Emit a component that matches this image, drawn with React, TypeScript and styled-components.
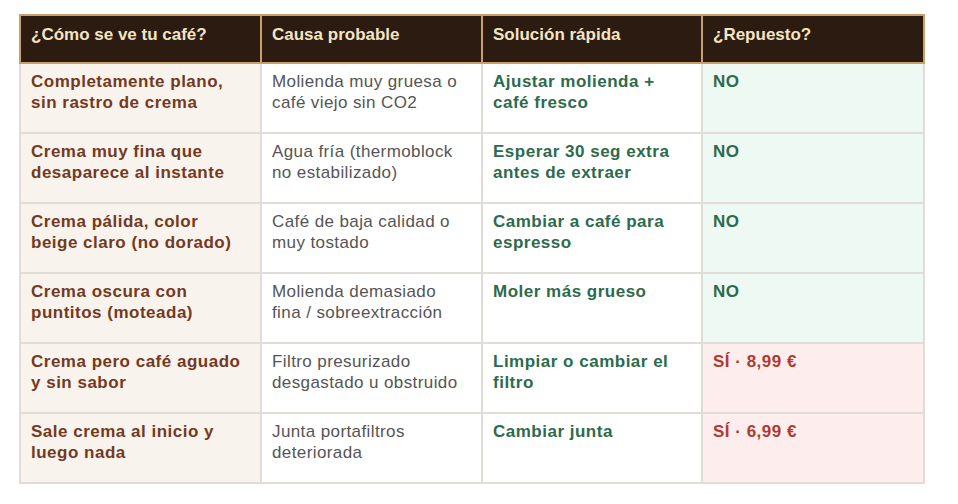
import React from "react";
import styled, { createGlobalStyle } from "styled-components";

const Global = createGlobalStyle`
  html, body { margin: 0; padding: 0; background: #ffffff; }
  body { font-family: "Liberation Sans", Arial, sans-serif; }
`;

const Page = styled.div`
  padding: 14px 0 0 19px;
`;

const Table = styled.table`
  border-collapse: collapse;
  width: 904px;
  table-layout: fixed;
  font-size: 17px;
  line-height: 21.6px;
`;

const Th = styled.th`
  background: #2c1b11;
  color: #f4e4c4;
  font-weight: bold;
  text-align: left;
  padding: 8px 12px 16px 10px;
  border: 2px solid #c9a06a;
  font-size: 17px;
`;

type Kind = "issue" | "cause" | "fix" | "no" | "yes";

const Td = styled.td<{ $kind: Kind }>`
  vertical-align: top;
  padding: 7px 13px 17px 10px;
  height: 44px;
  border: 2px solid #e0dcd8;
  background: ${(p) =>
    p.$kind === "issue"
      ? "#f8f3ed"
      : p.$kind === "no"
      ? "#eef9f3"
      : p.$kind === "yes"
      ? "#fdeeed"
      : "#ffffff"};
  color: ${(p) =>
    p.$kind === "issue"
      ? "#74391f"
      : p.$kind === "cause"
      ? "#555555"
      : p.$kind === "yes"
      ? "#b13a30"
      : "#2c6b4c"};
  font-weight: ${(p) => (p.$kind === "cause" ? "normal" : "bold")};
  letter-spacing: ${(p) => (p.$kind === "cause" ? "0.4px" : "0.5px")};
`;

const rows = [
  ["Completamente plano, sin rastro de crema", "Molienda muy gruesa o café viejo sin CO2", "Ajustar molienda + café fresco", "NO"],
  ["Crema muy fina que desaparece al instante", "Agua fría (thermoblock no estabilizado)", "Esperar 30 seg extra antes de extraer", "NO"],
  ["Crema pálida, color beige claro (no dorado)", "Café de baja calidad o muy tostado", "Cambiar a café para espresso", "NO"],
  ["Crema oscura con puntitos (moteada)", "Molienda demasiado fina / sobreextracción", "Moler más grueso", "NO"],
  ["Crema pero café aguado y sin sabor", "Filtro presurizado desgastado u obstruido", "Limpiar o cambiar el filtro", "SÍ · 8,99 €"],
  ["Sale crema al inicio y luego nada", "Junta portafiltros deteriorada", "Cambiar junta", "SÍ · 6,99 €"],
];

export default function App() {
  return (
    <Page>
      <Global />
      <Table>
        <colgroup>
          <col style={{ width: 241 }} />
          <col style={{ width: 221 }} />
          <col style={{ width: 220 }} />
          <col style={{ width: 222 }} />
        </colgroup>
        <thead>
          <tr>
            <Th>¿Cómo se ve tu café?</Th>
            <Th>Causa probable</Th>
            <Th>Solución rápida</Th>
            <Th>¿Repuesto?</Th>
          </tr>
        </thead>
        <tbody>
          {rows.map((r, i) => (
            <tr key={i}>
              <Td $kind="issue">{r[0]}</Td>
              <Td $kind="cause">{r[1]}</Td>
              <Td $kind="fix">{r[2]}</Td>
              <Td $kind={r[3] === "NO" ? "no" : "yes"}>{r[3]}</Td>
            </tr>
          ))}
        </tbody>
      </Table>
    </Page>
  );
}
